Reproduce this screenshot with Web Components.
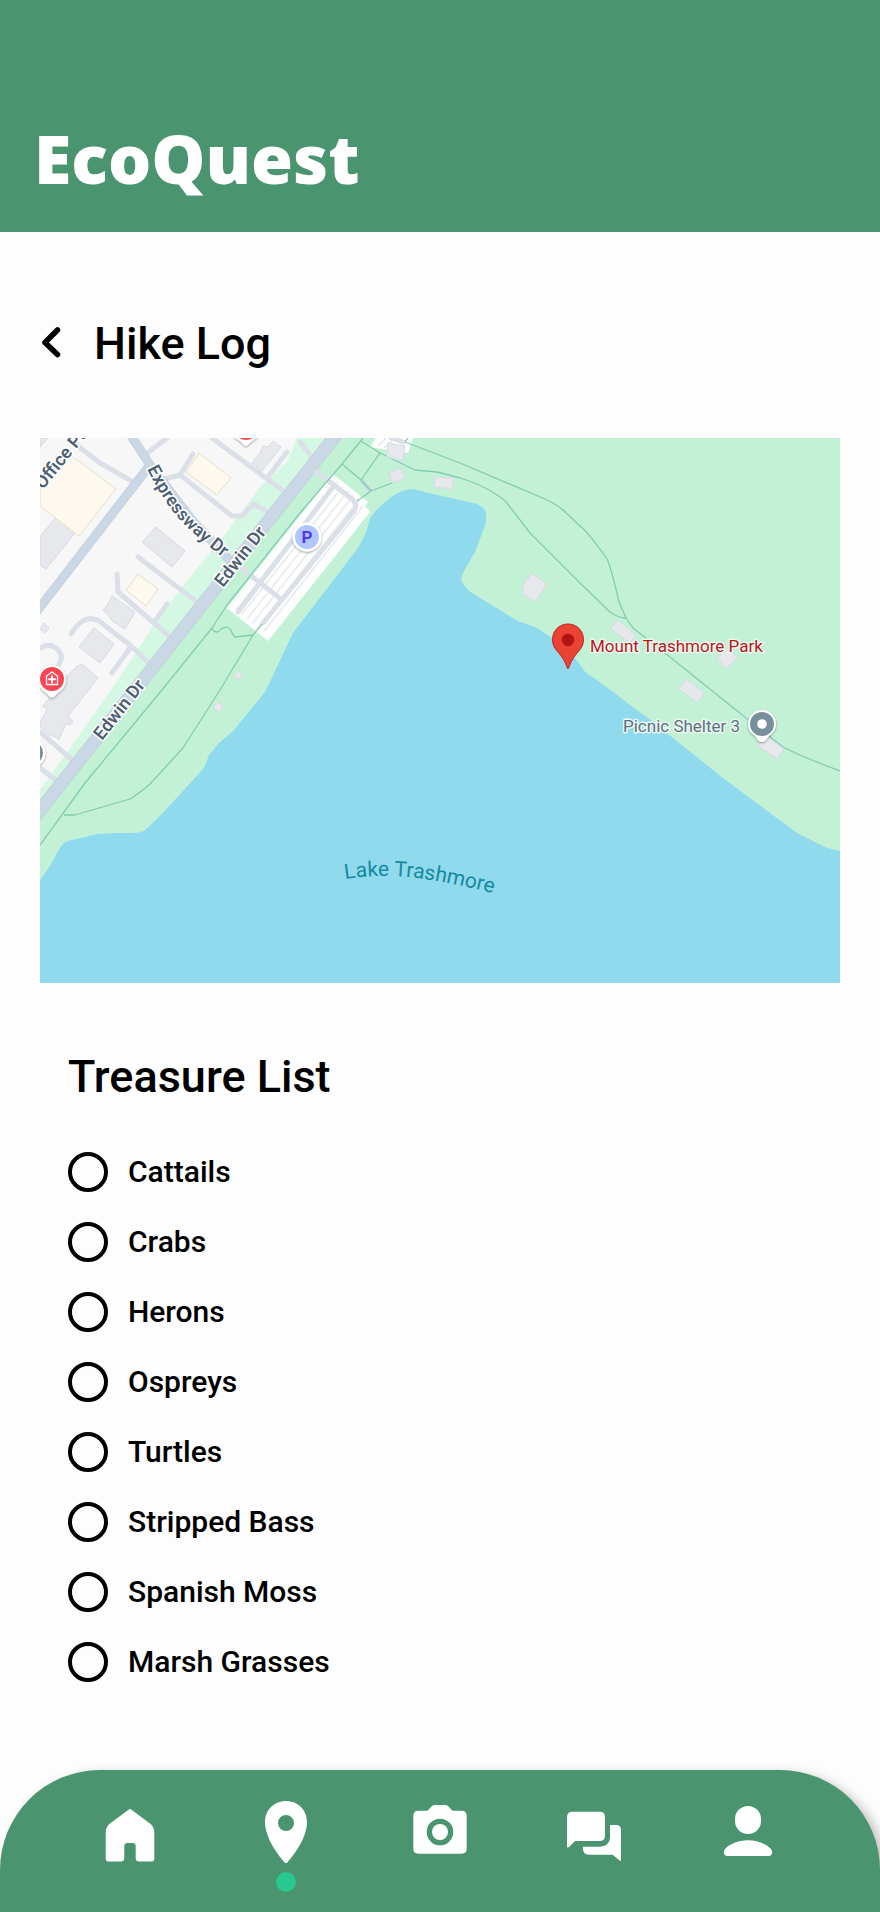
<!DOCTYPE html>
<html lang="en">
<head>
<meta charset="utf-8">
<meta name="viewport" content="width=device-width, initial-scale=1">
<title>EcoQuest</title>
<style>
  body {
    margin: 0;
    background: #fdfdfd;
    color: #000;
    font-family: Roboto, "Liberation Sans", sans-serif;
  }
</style>
</head>
<body>

<eco-app>
  <eco-header slot="header">EcoQuest</eco-header>
  <page-title>Hike Log</page-title>
  <trail-map></trail-map>
  <treasure-list heading="Treasure List">
    <treasure-item>Cattails</treasure-item>
    <treasure-item>Crabs</treasure-item>
    <treasure-item>Herons</treasure-item>
    <treasure-item>Ospreys</treasure-item>
    <treasure-item>Turtles</treasure-item>
    <treasure-item>Stripped Bass</treasure-item>
    <treasure-item>Spanish Moss</treasure-item>
    <treasure-item>Marsh Grasses</treasure-item>
  </treasure-list>
  <tab-bar slot="footer">
    <tab-button label="Home">
      <svg viewBox="2 0 72 72"><path d="M34.500 13.800Q36 12.400 37.500 13.800L56 27.600Q60.300 31 60.300 36.500V62.500Q60.300 65.600 57 65.600H45Q41.700 65.600 41.700 62V50Q41.700 47 38.700 47H33.300Q30.300 47 30.300 50V62Q30.300 65.600 27 65.600H15Q11.700 65.600 11.700 62.500V36.500Q11.700 31 16 27.600Z"/></svg>
    </tab-button>
    <tab-button label="Map" current>
      <svg viewBox="0 0 72 72"><path fill-rule="evenodd" d="M36 5C24 5 15 14 15 26C15 41 27 58 34.500 66.200Q36 68 37.500 66.200C45 58 57 41 57 26C57 14 48 5 36 5ZM36 19a8 8 0 1 1 0 16a8 8 0 1 1 0-16Z"/></svg>
    </tab-button>
    <tab-button label="Camera">
      <svg viewBox="0 0 72 72"><path fill-rule="evenodd" d="M14.500 14.700H23.500L27.800 10.200Q29 9 31 9H41Q43 9 44.200 10.200L48.500 14.700H57.500Q62.700 14.700 62.700 20V52.500Q62.700 57.700 57.500 57.700H14.500Q9.300 57.700 9.300 52.500V20Q9.300 14.700 14.500 14.700ZM36 22.700a13.300 13.300 0 1 0 0 26.600a13.300 13.300 0 1 0 0-26.600Z"/><circle cx="36" cy="36" r="8"/></svg>
    </tab-button>
    <tab-button label="Messages">
      <svg viewBox="0 0 72 72"><path d="M14.500 15.700H41.500Q47 15.700 47 21V39.500Q47 45 41.500 45H17L11 51Q9 52.700 9 50V21Q9 15.700 14.500 15.700Z"/><path d="M52 29H58Q63 29 63 34V63.500Q63 66 61 64L54.700 58.700H31Q25 58.700 25 53V50.700H41Q52 50.700 52 40Z"/></svg>
    </tab-button>
    <tab-button label="Profile">
      <svg viewBox="0 0 72 72"><rect x="23" y="10" width="26" height="28" rx="13"/><path d="M36 44.300C46 44.300 54 48 58.500 52.500C61.500 56 60 60 56.500 60H15.500C12 60 10.500 56 13.500 52.500C18 48 26 44.300 36 44.300Z"/></svg>
    </tab-button>
  </tab-bar>
</eco-app>

<template id="eco-app-template">
  <style>
    :host {
      display: flex;
      flex-direction: column;
      min-height: 100vh;
    }

    main {
      display: flex;
      flex-direction: column;
      flex: 1;
      gap: 66px;
      padding: 84px 40px 88px;
    }
  </style>
  <slot name="header"></slot>
  <main><slot></slot></main>
  <slot name="footer"></slot>
</template>

<template id="eco-header-template">
  <style>
    :host {
      display: block;
      padding: 118px 34px 34px;
      background: #4a956f;
      color: #fff;
    }

    h1 {
      margin: 0;
      font: 900 68px/80px "Noto Sans", "Open Sans", sans-serif;
    }
  </style>
  <header><h1><slot></slot></h1></header>
</template>

<template id="page-title-template">
  <style>
    :host {
      display: flex;
      align-items: center;
      gap: 32px;
    }

    a {
      display: flex;
    }

    h2 {
      margin: 0;
      font-size: 45px;
      font-weight: 500;
      line-height: 56px;
    }
  </style>
  <a href="#" aria-label="Back">
    <svg width="22" height="36" viewBox="0 0 22 36" fill="none" stroke="#000" stroke-width="5.500" stroke-linecap="round" stroke-linejoin="round"><path d="M17.500 4L5 16.500L17.500 28.500"/></svg>
  </a>
  <h2><slot></slot></h2>
</template>

<template id="trail-map-template">
  <style>
    :host {
      display: block;
    }

    svg {
      display: block;
      width: 100%;
      height: auto;
    }

    .fine { fill: none; stroke: #82ccb2; stroke-width: 1.300; stroke-linejoin: round; }
    .lane { fill: none; stroke: #dbe0e8; stroke-width: 5; stroke-linecap: round; stroke-linejoin: round; }
    .road-edge { fill: none; stroke: #bbc8d8; stroke-width: 9; }
    .road { fill: none; stroke: #cad7e4; stroke-width: 8; }
    .block { fill: #e6e8ec; stroke: #d7dae6; }
    .shop { fill: #fef9ee; stroke: #e9dfc6; }

    text { font-size: 17px; paint-order: stroke; stroke-linejoin: round; }
    .street { font-size: 18px; font-weight: 600; fill: #4d5f73; stroke: #fff; stroke-width: 3px; }
    .place { fill: #bb171d; stroke: #e9f8ef; stroke-width: 3px; }
    .spot { fill: #5d7083; stroke: #e9f8ef; stroke-width: 3px; }
    .lake { font-size: 21px; fill: #168a9e; }
    .parking { font-weight: 700; fill: #4b35ff; text-anchor: middle; }
  </style>
  <svg viewBox="40 438 800 545" role="img" aria-label="Map of Mount Trashmore Park">
    <defs>
      <pattern id="bays" width="8" height="7" patternUnits="userSpaceOnUse" patternTransform="rotate(-51.700)">
        <path d="M0 3.500H8" stroke="#e4e6e9" stroke-width="1.500"/>
      </pattern>
      <path id="expressway" d="M147 469Q158 491 171 509Q186 530 229 562"/>
      <path id="lake" d="M345 879Q385 873 420 878.500Q455 883 500 895"/>
      <filter id="drop" x="-30%" y="-30%" width="160%" height="160%">
        <feDropShadow dx="0" dy="1" stdDeviation="1" flood-opacity=".4"/>
      </filter>
    </defs>

    <!-- ground -->
    <path fill="#c3f1d6" d="M40 438H840V983H40Z"/>
    <path fill="#d4f8e3" d="M40 438H334L40 810Z"/>
    <path fill="#f7f7f7" d="M40 438H297L287 462L260 487L223 537L190 577L157 620L120 677L97 710L40 790Z"/>
    <path fill="#90daee" d="M40 880L48 869L61 846Q63 843 68 841L98 834L117 833L133 833Q139 833 144 831L158 818L183 791L204 768L209 755L219 743L234 730L265 692L293 633L358 548L366 533L370 518Q377 508 390 498Q402 489 413 489L433 494L477 504Q487 508 486 516V523L475 552L463 573Q460 579 462 582Q466 589 472 593L518 621L537 628L552 638L575 658L586 673L597 680L653 722L723 778L797 833L825 847Q833 850 840 851V983H40Z"/>

    <!-- buildings -->
    <path class="block" d="M40 438H48L40 447ZM56 517L75 533L46 569L40 565V537ZM156 527L185 551L172 567L142 542ZM112 596L135 612L125 629L112 621L110 617L103 610L107 606ZM94 628L114 644L100 663L79 647ZM44 623L49 628L45 633L40 629ZM82 664L98 678L68 716L73 722L70 725L66 723L59 740L54 736H50L40 727V722L47 710L43 706L60 684L75 668L77 666ZM273 441L281 447L262 471L252 463L260 453L263 446L268 447Z"/>
    <path class="shop" d="M68 453L116 489L79 536L40 506V482ZM199 453L231 478L217 495L186 472ZM138 574L158 589L146 606L126 590Z"/>

    <!-- service lanes -->
    <path class="lane" d="M74 443L100 463L135 483M167 438L145 455M165 479L180 475L193 454M180 475L232 516H242L254 504L268 512M212 438L285 492M287 452L268 477M138 557L197 602M117 574L118 592L168 635M167 604L155 621M71 634Q82 616 94 619Q99 620 104 625L130 645L148 662M130 648L112 673M40 648Q50 642 58 650Q65 657 57 667M40 732L72 760M40 768L56 780M300 442L312 457"/>

    <!-- streets -->
    <path class="road-edge" d="M130 434L150 465L192 520L235 566M150 465L34 615"/>
    <path class="road" d="M130 434L150 465L192 520L235 566M150 465L34 615"/>
    <path class="road-edge" style="stroke-width:13" d="M30 823L344 425"/>
    <path class="road" style="stroke-width:12" d="M30 823L344 425"/>

    <!-- car parks -->
    <path fill="#fff" d="M333 474L368 502L365 506L370 512L268 641L227 608Z"/>
    <path fill="url(#bays)" d="M333 478L362 502L365 512L268 636L231 606Z"/>
    <path class="lane" d="M317 472L352 499Q358 504 354 511L263 623M333 487L238 612M241 568L282 600"/>
    <path fill="#fff" d="M376 438H413L408 453L370 447Z"/>
    <path d="M378 446L386 438M384 448L394 439" stroke="#e4e6e9" stroke-width="1.500"/>
    <path class="lane" d="M391 438L403 442"/>
    <path stroke="#cad7e4" stroke-width="4" d="M361 480L371 491"/>

    <!-- footpaths -->
    <path class="fine" d="M40 845L85 783L162 690L212 628L227 605L300 513L342 464L363 438M64 815H75L130 799Q140 793 150 784L183 748L220 690L253 635L262 624M212 629Q217 635 221 629Q229 624 232 633L235 637L253 635M361 441L380 453L415 470L437 472L460 478Q483 485 497 495Q503 498 507 503L530 533L580 583L610 612Q618 618 626 618M380 453L361 480L342 464M361 480L371 491L392 483M371 491L357 501M405 442L460 463L545 499Q556 504 563 510L580 526Q589 533 607 559Q611 567 619 602L626 618L633 628L665 653L736 710L783 747Q800 756 840 771M408 438L405 442"/>
    <path class="block" d="M388 443L405 446L403 461L387 457ZM401 468L405 478L393 483L389 473ZM435 477L453 478L452 489L434 487ZM532 573L547 584L535 602L522 593L524 588L522 586ZM618 620L636 635L630 643L610 629ZM727 648L738 657L727 669L717 659ZM686 679L704 693L698 703L679 689ZM768 737L784 749L777 759L757 745ZM238 671L243 675L239 680L234 676ZM217 702L223 706L219 712L213 708Z"/>

    <!-- labels -->
    <text class="street" transform="translate(43 490) rotate(-51)">Office Pa</text>
    <text class="street"><textPath href="#expressway">Expressway Dr</textPath></text>
    <text class="street" transform="translate(223 588) rotate(-51.700)">Edwin Dr</text>
    <text class="street" transform="translate(102 741) rotate(-51.700)">Edwin Dr</text>
    <text class="place" x="590" y="652">Mount Trashmore Park</text>
    <text class="spot" x="623" y="732">Picnic Shelter 3</text>
    <text class="lake"><textPath href="#lake">Lake Trashmore</textPath></text>

    <!-- markers -->
    <g filter="url(#drop)">
      <circle cx="307" cy="537" r="14.500" fill="#fff"/>
      <path fill="#fff" d="M38 679a14 14 0 1 1 28 0Q66 688 58 693L54 697Q52 698 50 697L46 693Q38 688 38 679Z"/>
      <path fill="#fff" d="M232 428H260Q260 437 252 441L248 445Q246 447 244 445L240 441Q232 437 232 428Z"/>
      <circle cx="31" cy="753" r="14.500" fill="#fff"/>
      <path fill="#fff" d="M748 724a14 14 0 1 1 28 0Q776 731 769 736L765 741Q762 743 759 741L755 736Q748 731 748 724Z"/>
    </g>
    <circle cx="307" cy="537" r="12" fill="#b0c6ff"/>
    <text class="parking" x="307" y="543">P</text>
    <circle cx="52" cy="679" r="12" fill="#fb4655"/>
    <path fill="none" stroke="#fff" stroke-width="1.300" d="M46.500 684.500V676L52 672L57.500 676V684.500Z"/>
    <path fill="none" stroke="#fff" stroke-width="2" d="M52 675.500V683M48.300 679.200H55.700"/>
    <circle cx="246" cy="428" r="12" fill="#fb4655"/>
    <circle cx="31" cy="753" r="12" fill="#78909c"/>
    <circle cx="762" cy="724" r="12" fill="#78909c"/>
    <circle cx="762" cy="724" r="4.800" fill="#fff"/>
    <path fill="#ea4335" stroke="#c5221f" d="M568 624C559 624 552.500 631 552.500 639.500C552.500 651 562 652 567 667Q568 670.500 569 667C574 652 583.500 651 583.500 639.500C583.500 631 577 624 568 624Z"/>
    <circle cx="568" cy="640" r="6.200" fill="#b31412"/>
  </svg>
</template>

<template id="treasure-list-template">
  <style>
    :host {
      display: block;
      padding: 0 28px;
    }

    h2 {
      margin: 0 0 47px;
      font-size: 45px;
      font-weight: 500;
      line-height: 56px;
    }

    .items {
      display: flex;
      flex-direction: column;
      gap: 30px;
    }
  </style>
  <h2></h2>
  <div class="items"><slot></slot></div>
</template>

<template id="treasure-item-template">
  <style>
    :host {
      display: block;
    }

    label {
      display: flex;
      align-items: center;
      gap: 20px;
      font-size: 30px;
      font-weight: 500;
      line-height: 40px;
    }

    input {
      appearance: none;
      box-sizing: border-box;
      width: 40px;
      height: 40px;
      margin: 0;
      border: 4px solid #000;
      border-radius: 50%;
    }

    input:checked {
      background: #27c990;
    }
  </style>
  <label><input type="checkbox"><span><slot></slot></span></label>
</template>

<template id="tab-bar-template">
  <style>
    :host {
      display: block;
      background: #4a956f;
      border-radius: 100px 100px 0 0;
      box-shadow: 6px 4px 12px rgba(0, 0, 0, 0.25);
    }

    nav {
      display: flex;
      padding: 26px 55px 20px;
    }
  </style>
  <nav><slot></slot></nav>
</template>

<template id="tab-button-template">
  <style>
    :host {
      display: block;
      flex: 1;
    }

    button {
      display: flex;
      flex-direction: column;
      align-items: center;
      gap: 4px;
      width: 100%;
      padding: 0;
      border: 0;
      background: none;
      cursor: pointer;
    }

    button::after {
      content: "";
      width: 20px;
      height: 20px;
      border-radius: 50%;
    }

    :host([current]) button::after {
      background: #27c990;
    }

    ::slotted(svg) {
      display: block;
      width: 72px;
      height: 72px;
      fill: #fff;
    }
  </style>
  <button type="button"><slot></slot></button>
</template>

<script>
  class TemplateElement extends HTMLElement {
    constructor() {
      super();
      const template = document.querySelector(`#${this.localName}-template`);
      this.attachShadow({ mode: "open" });
      this.shadowRoot.appendChild(template.content.cloneNode(true));
    }
  }

  customElements.define("eco-app", class extends TemplateElement {});
  customElements.define("eco-header", class extends TemplateElement {});
  customElements.define("page-title", class extends TemplateElement {});
  customElements.define("trail-map", class extends TemplateElement {});
  customElements.define("treasure-item", class extends TemplateElement {});
  customElements.define("tab-bar", class extends TemplateElement {});

  customElements.define(
    "treasure-list",
    class extends TemplateElement {
      connectedCallback() {
        this.shadowRoot.querySelector("h2").textContent =
          this.getAttribute("heading");
      }
    }
  );

  customElements.define(
    "tab-button",
    class extends TemplateElement {
      connectedCallback() {
        const button = this.shadowRoot.querySelector("button");
        button.setAttribute("aria-label", this.getAttribute("label"));
        this.markCurrent(this.hasAttribute("current"));
        button.addEventListener("click", () => {
          for (const tab of this.parentElement.children) {
            tab.markCurrent(tab === this);
          }
        });
      }

      markCurrent(isCurrent) {
        this.toggleAttribute("current", isCurrent);
        this.shadowRoot
          .querySelector("button")
          .setAttribute("aria-current", isCurrent ? "page" : "false");
      }
    }
  );
</script>
</body>
</html>
